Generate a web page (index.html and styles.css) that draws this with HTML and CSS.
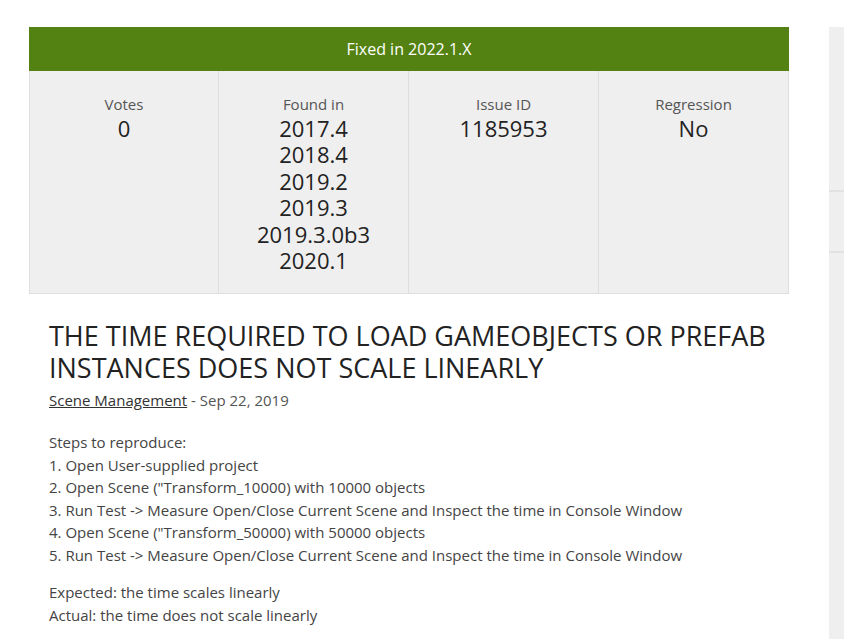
FILE: index.html
```html
<!DOCTYPE html>
<html lang="en">
<head>
    <meta charset="UTF-8">
    <meta name="viewport" content="width=device-width, initial-scale=1.0">
    <title>Issue 1185953</title>
    <link rel="stylesheet" href="styles.css">
</head>
<body>
    <div class="page">
        <main class="issue">
            <div class="status">Fixed in 2022.1.X</div>
            <div class="facts">
                <div class="fact">
                    <div class="fact-label">Votes</div>
                    <div class="fact-value">0</div>
                </div>
                <div class="fact">
                    <div class="fact-label">Found in</div>
                    <div class="fact-value">2017.4</div>
                    <div class="fact-value">2018.4</div>
                    <div class="fact-value">2019.2</div>
                    <div class="fact-value">2019.3</div>
                    <div class="fact-value">2019.3.0b3</div>
                    <div class="fact-value">2020.1</div>
                </div>
                <div class="fact">
                    <div class="fact-label">Issue ID</div>
                    <div class="fact-value">1185953</div>
                </div>
                <div class="fact">
                    <div class="fact-label">Regression</div>
                    <div class="fact-value">No</div>
                </div>
            </div>

            <div class="details">
                <h1 class="issue-title">The time required to load GameObjects or Prefab instances does not scale linearly</h1>
                <p class="meta"><a href="#">Scene Management</a> - Sep 22, 2019</p>

                <p class="body-text">
                    Steps to reproduce:<br>
                    1. Open User-supplied project<br>
                    2. Open Scene ("Transform_10000) with 10000 objects<br>
                    3. Run Test -&gt; Measure Open/Close Current Scene and Inspect the time in Console Window<br>
                    4. Open Scene ("Transform_50000) with 50000 objects<br>
                    5. Run Test -&gt; Measure Open/Close Current Scene and Inspect the time in Console Window
                </p>
                <p class="body-text">
                    Expected: the time scales linearly<br>
                    Actual: the time does not scale linearly
                </p>
            </div>
        </main>

        <aside class="sidebar">
            <div class="side-block side-top"></div>
            <div class="side-block side-mid"></div>
            <div class="side-block side-bottom"></div>
        </aside>
    </div>
</body>
</html>
```

FILE: styles.css
```css
* {
    margin: 0;
    padding: 0;
    box-sizing: border-box;
}

body {
    background: #fff;
    color: #222;
    font-family: 'Open Sans', 'Noto Sans', sans-serif;
    overflow: hidden;
}

.page {
    display: flex;
    gap: 40px;
    padding: 27px 0 0 29px;
}

.issue {
    width: 760px;
    flex-shrink: 0;
}

.status {
    height: 44px;
    line-height: 44px;
    background: #538212;
    color: #fff;
    font-size: 16px;
    text-align: center;
}

.facts {
    display: grid;
    grid-template-columns: 188px 190px 190px 1fr;
    background: #efefef;
    border: 1px solid #dedede;
    border-top: none;
}

.fact {
    text-align: center;
    padding: 22px 8px 20px;
    border-left: 1px solid #dedede;
}

.fact:first-child {
    border-left: none;
}

.fact-label {
    font-size: 15px;
    line-height: 22px;
    color: #555;
}

.fact-value {
    font-size: 22px;
    line-height: 26.4px;
    color: #222;
}

.details {
    padding: 26px 20px 0;
}

.issue-title {
    font-size: 27px;
    line-height: 32px;
    font-weight: 400;
    text-transform: uppercase;
    color: #222;
}

.meta {
    margin-top: 5px;
    font-size: 15px;
    line-height: 22px;
    color: #555;
}

.meta a {
    color: #333;
}

.body-text {
    margin-top: 20px;
    font-size: 15px;
    line-height: 22.5px;
    color: #444;
}

.body-text + .body-text {
    margin-top: 15px;
}

.sidebar {
    width: 15px;
    flex-shrink: 0;
    background: #efefef;
    height: 640px;
}

.side-block {
    border-bottom: 2px solid #e2e2e2;
}

.side-top {
    height: 165px;
}

.side-mid {
    height: 61px;
}

.side-bottom {
    border-bottom: none;
}
```
